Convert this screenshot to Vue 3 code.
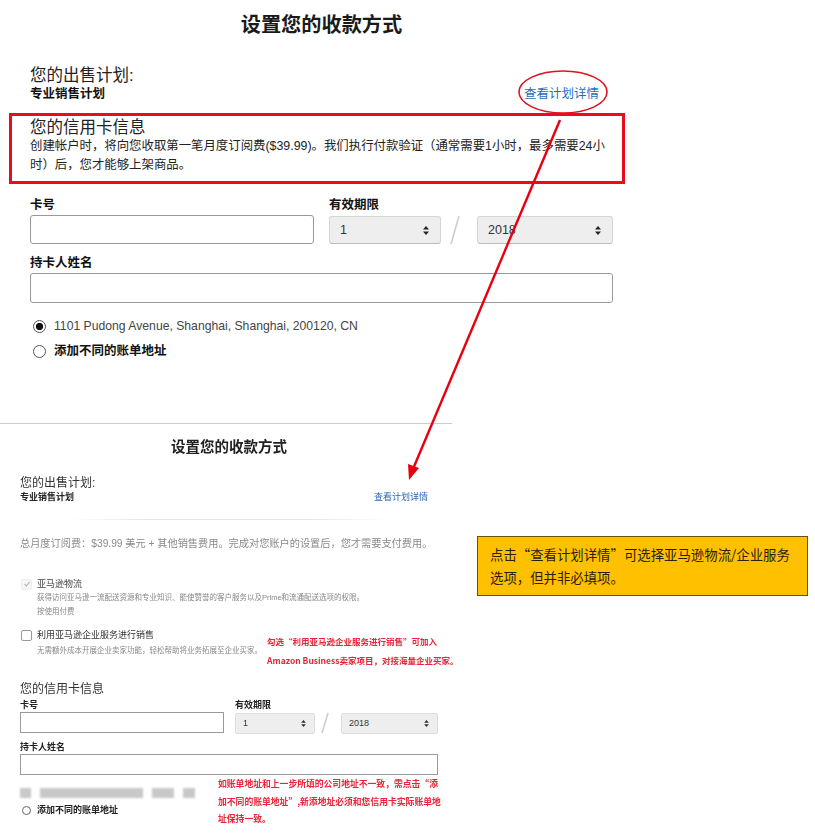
<script setup>
const blurBlocks = [11, 103, 22, 12]
</script>

<template>
  <div class="page">
    <section class="top">
      <h1 class="title">设置您的收款方式</h1>
      <div class="plan">
        <div>
          <div class="heading">您的出售计划:</div>
          <div class="strong plan-name">专业销售计划</div>
        </div>
        <a class="link">查看计划详情</a>
      </div>
      <div class="heading card-heading">您的信用卡信息</div>
      <p class="para">创建帐户时，将向您收取第一笔月度订阅费($39.99)。我们执行付款验证（通常需要1小时，最多需要24小时）后，您才能够上架商品。</p>
      <div class="form">
        <div class="field-number">
          <div class="strong">卡号</div>
          <div class="input"></div>
        </div>
        <div class="field-expiry">
          <div class="strong">有效期限</div>
          <div class="expiry">
            <div class="select month">
              <span>1</span>
              <svg width="6" height="9" viewBox="0 0 6 9"><path d="M3 0 6 3.4H0ZM3 9 0 5.6H6Z" fill="#222" /></svg>
            </div>
            <svg class="slash" width="36" height="30" viewBox="0 0 36 30"><path d="M18 1 10 29" stroke="#ccc" stroke-width="1.5" fill="none" /></svg>
            <div class="select year">
              <span>2018</span>
              <svg width="6" height="9" viewBox="0 0 6 9"><path d="M3 0 6 3.4H0ZM3 9 0 5.6H6Z" fill="#222" /></svg>
            </div>
          </div>
        </div>
      </div>
      <div class="strong name-label">持卡人姓名</div>
      <div class="input name-input"></div>
      <div class="radio-row first">
        <span class="radio on"></span>
        <span class="address">1101 Pudong Avenue, Shanghai, Shanghai, 200120, CN</span>
      </div>
      <div class="radio-row second">
        <span class="radio"></span>
        <span class="strong">添加不同的账单地址</span>
      </div>
    </section>

    <section class="bottom">
      <h2 class="b-title">设置您的收款方式</h2>
      <div class="b-plan">
        <div>
          <div class="b-heading">您的出售计划:</div>
          <div class="b-strong">专业销售计划</div>
        </div>
        <a class="b-link">查看计划详情</a>
      </div>
      <div class="b-shadow"></div>
      <p class="b-fee">总月度订阅费：$39.99 美元 + 其他销售费用。完成对您账户的设置后，您才需要支付费用。</p>

      <div class="b-check first-check">
        <span class="box checked">
          <svg width="8" height="8" viewBox="0 0 8 8"><path d="M1.5 4 3.3 6 6.6 1.8" stroke="#bbb" stroke-width="1.2" fill="none" /></svg>
        </span>
        <span class="b-option muted">亚马逊物流</span>
      </div>
      <div class="b-desc">获得访问亚马逊一流配送资源和专业知识、能使赞誉的客户服务以及Prime和流通配送选项的权限。</div>
      <div class="b-desc">按使用付费</div>

      <div class="b-check second-check">
        <span class="box"></span>
        <span class="b-option">利用亚马逊企业服务进行销售</span>
      </div>
      <div class="b-desc third-desc">无需额外成本开展企业卖家功能，轻松帮助将业务拓展至企业买家。</div>

      <div class="b-heading b-card">您的信用卡信息</div>
      <div class="b-form">
        <div>
          <div class="b-strong">卡号</div>
          <div class="b-input"></div>
        </div>
        <div>
          <div class="b-strong">有效期限</div>
          <div class="b-expiry">
            <div class="b-select b-month">
              <span>1</span>
              <svg width="5" height="7" viewBox="0 0 6 9"><path d="M3 0 6 3.4H0ZM3 9 0 5.6H6Z" fill="#333" /></svg>
            </div>
            <svg class="slash" width="26" height="22" viewBox="0 0 26 22"><path d="M13 1 7 21" stroke="#ccc" stroke-width="1.5" fill="none" /></svg>
            <div class="b-select b-year">
              <span>2018</span>
              <svg width="5" height="7" viewBox="0 0 6 9"><path d="M3 0 6 3.4H0ZM3 9 0 5.6H6Z" fill="#333" /></svg>
            </div>
          </div>
        </div>
      </div>
      <div class="b-strong b-name-label">持卡人姓名</div>
      <div class="b-input b-name-input"></div>
      <div class="b-blur">
        <span v-for="(w, i) in blurBlocks" :key="i" class="blur-chunk" :style="{ width: w + 'px' }"></span>
      </div>
      <div class="b-radio-row">
        <span class="b-radio"></span>
        <span class="b-strong">添加不同的账单地址</span>
      </div>
    </section>

    <!-- annotations laid over the screenshots -->
    <div class="red-box"></div>
    <svg class="overlay" width="815" height="835" viewBox="0 0 815 835">
      <ellipse cx="563" cy="92" rx="44" ry="21" fill="none" stroke="#e3101e" stroke-width="1.6" />
      <path d="M560 120 413 469" stroke="#e8000f" stroke-width="2.4" fill="none" />
      <path d="M409 480 408 464 419 468Z" fill="#e8000f" />
    </svg>
    <div class="note">点击“查看计划详情”可选择亚马逊物流/企业服务<br />选项，但并非必填项。</div>
    <div class="red-note note-a">勾选“利用亚马逊企业服务进行销售”可加入<br />Amazon Business卖家项目，对接海量企业买家。</div>
    <div class="red-note note-b">如账单地址和上一步所填的公司地址不一致，需点击“添加不同的账单地址”,新添地址必须和您信用卡实际账单地址保持一致。</div>
  </div>
</template>

<style>
html, body { margin: 0; background: #fff; }
</style>

<style scoped>
.page {
  position: relative;
  width: 815px;
  height: 835px;
  overflow: hidden;
  background: #fff;
  color: #111;
  font-family: "Liberation Sans", "Noto Sans CJK SC", sans-serif;
}
.top {
  box-sizing: border-box;
  width: 613px;
  height: 423px;
  padding-left: 30px;
}
.title {
  margin: 0;
  font-size: 20.2px;
  line-height: 50px;
  font-weight: 700;
  text-align: center;
  color: #1a1a1a;
}
.plan {
  display: flex;
  justify-content: space-between;
  align-items: flex-end;
  margin-top: 15px;
}
.heading { font-size: 16.5px; line-height: 20px; color: #222; }
.strong { font-size: 12.5px; line-height: 16px; font-weight: 700; color: #111; }
.plan-name { margin-top: 1px; }
.link { font-size: 12.5px; line-height: 16px; color: #1f6fc0; padding-right: 14px; }
.card-heading { margin-top: 15px; }
.para { margin: 0; font-size: 12.4px; line-height: 19px; color: #222; }
.form { display: flex; gap: 15px; margin-top: 22px; }
.field-number { width: 284px; }
.field-expiry { flex: 1; }
.input {
  box-sizing: border-box;
  height: 29px;
  margin-top: 2px;
  border: 1px solid #999;
  border-radius: 3px;
  background: #fff;
}
.expiry { display: flex; align-items: center; margin-top: 2px; }
.select {
  box-sizing: border-box;
  height: 28px;
  display: flex;
  align-items: center;
  justify-content: space-between;
  padding: 0 11px 0 10px;
  border: 1px solid #d5d5d5;
  border-bottom-color: #bbb;
  border-radius: 3px;
  background: #eee;
  font-size: 12.5px;
  color: #333;
}
.month { width: 112px; }
.year { width: 136px; }
.slash { flex: none; }
.name-label { margin-top: 10px; }
.name-input { height: 30px; margin-top: 2px; }
.radio-row { display: flex; align-items: center; height: 20px; }
.first { margin-top: 13px; }
.second { margin-top: 5px; }
.radio {
  box-sizing: border-box;
  width: 13px;
  height: 13px;
  margin: 0 8px 0 3px;
  border: 1px solid #555;
  border-radius: 50%;
  background: #fff;
}
.radio.on { background: radial-gradient(circle, #111 0 3.4px, #fff 3.9px); }
.address { font-size: 12.2px; color: #444; }

.bottom {
  box-sizing: border-box;
  width: 452px;
  height: 412px;
  padding: 11px 14px 0 20px;
  border-top: 1px solid #ccc;
  filter: blur(0.3px);
}
.b-title {
  margin: 0;
  font-size: 14.5px;
  line-height: 24px;
  font-weight: 700;
  text-align: center;
  color: #222;
}
.b-plan {
  display: flex;
  justify-content: space-between;
  align-items: flex-end;
  margin-top: 17px;
}
.b-heading { font-size: 12px; line-height: 14px; color: #333; }
.b-strong { font-size: 9px; line-height: 14px; font-weight: 700; color: #222; }
.b-link { font-size: 9px; line-height: 14px; color: #2a68b8; padding-right: 10px; }
.b-shadow {
  height: 1px;
  margin: 15px 50px 0 50px;
  background: linear-gradient(90deg, #fff, #e4e4e4 25%, #e4e4e4 75%, #fff);
}
.b-fee { margin: 17px 0 0; font-size: 10.2px; line-height: 14px; color: #8a8a8a; white-space: nowrap; }
.b-check { display: flex; align-items: center; height: 12px; }
.first-check { margin-top: 27px; }
.second-check { margin-top: 11px; }
.box {
  box-sizing: border-box;
  display: flex;
  align-items: center;
  justify-content: center;
  width: 11px;
  height: 11px;
  margin: 0 5px 0 1px;
  border: 1px solid #999;
  border-radius: 2px;
  background: #fff;
}
.box.checked { border-color: #eee; background: #f6f6f6; }
.b-option { font-size: 9px; line-height: 12px; color: #333; white-space: nowrap; }
.b-option.muted { color: #444; }
.b-desc {
  height: 14px;
  margin: 1px 0 -1px 17px;
  font-size: 7.5px;
  line-height: 14px;
  color: #888;
  white-space: nowrap;
}
.third-desc { margin-top: 3px; }
.b-card { margin-top: 25px; }
.b-form { display: flex; gap: 11px; margin-top: 2px; }
.b-form > :first-child { width: 204px; }
.b-input {
  box-sizing: border-box;
  height: 21px;
  border: 1px solid #999;
  background: #fff;
}
.b-expiry { display: flex; align-items: center; }
.b-select {
  box-sizing: border-box;
  height: 21px;
  display: flex;
  align-items: center;
  justify-content: space-between;
  padding: 0 8px 0 7px;
  border: 1px solid #ddd;
  border-radius: 2px;
  background: #eee;
  font-size: 9px;
  color: #333;
}
.b-month { width: 80px; }
.b-year { width: 97px; }
.b-name-label { margin-top: 6px; }
.b-name-input { margin-top: 0; }
.b-blur {
  display: flex;
  gap: 9px;
  width: 175px;
  height: 10px;
  margin-top: 13px;
  filter: blur(1px);
}
.blur-chunk { height: 10px; background: #c8c8c8; }
.b-radio-row { display: flex; align-items: center; height: 12px; margin-top: 6px; }
.b-radio {
  box-sizing: border-box;
  width: 9px;
  height: 9px;
  margin: 0 6px 0 2px;
  border: 1px solid #666;
  border-radius: 50%;
}

.red-box {
  position: absolute;
  left: 9px;
  top: 113px;
  box-sizing: border-box;
  width: 616px;
  height: 71px;
  border: 3px solid #e60d1c;
}
.overlay { position: absolute; left: 0; top: 0; pointer-events: none; }
.note {
  position: absolute;
  left: 477px;
  top: 536px;
  box-sizing: border-box;
  width: 331px;
  height: 60px;
  padding: 6px 12px;
  border: 1px solid #6b5200;
  background: #ffc000;
  font-family: "Noto Sans CJK SC", sans-serif;
  font-size: 13.4px;
  line-height: 23px;
  color: #2a2000;
}
.red-note {
  position: absolute;
  font-family: "Noto Sans CJK SC", sans-serif;
  font-weight: 700;
  color: #e8253a;
}
.note-a { left: 267px; top: 632px; font-size: 8.5px; line-height: 18.5px; white-space: nowrap; }
.note-b { left: 218px; top: 775px; width: 224px; font-size: 8.8px; line-height: 17.5px; }
</style>
